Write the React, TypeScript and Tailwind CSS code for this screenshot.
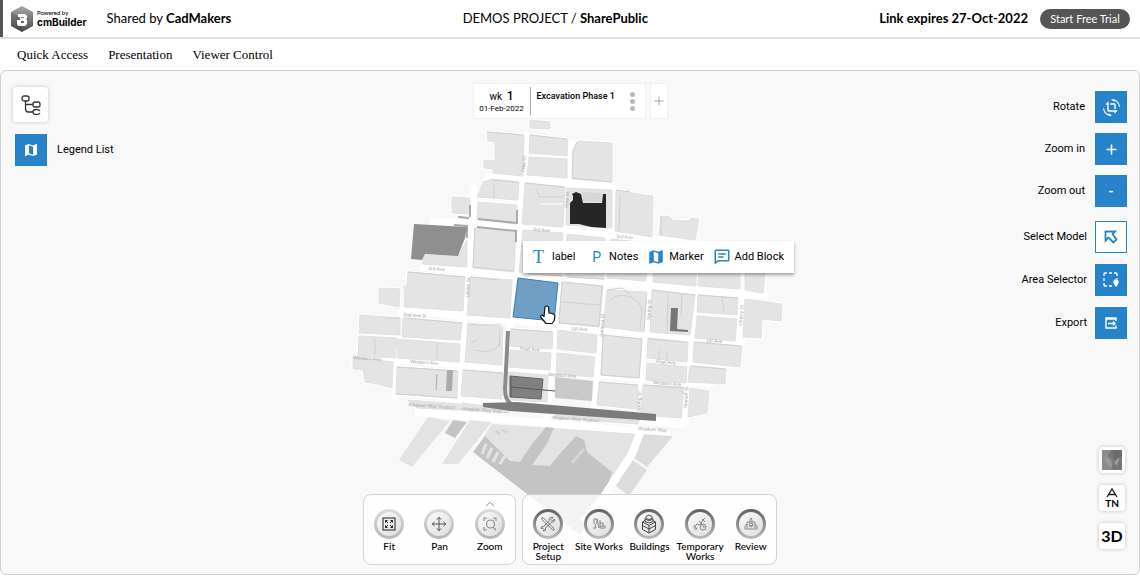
import type { ReactNode } from "react";
import { ChevronUp, Move, Plus } from "lucide-react";
import { BiCommentDetail } from "react-icons/bi";
import { MdCropRotate, MdMap } from "react-icons/md";

const blocks = [
  "530,120 550,122 550,129 530,128",
  "487,132 524,135 523,176 493,173 493,169 484,168 484,160 495,161 495,142 488,141",
  "530,135 568,140 567,156 529,153",
  "529,157 567,159 567,178 527,175",
  "578,141 612,143 612,182 573,179 573,150",
  "452,197 470,198 470,214 452,213",
  "483,182 492,179 519,182 518,200 477,197",
  "478,202 517,205 516,223 477,218",
  "525,183 565,187 563,227 522,224",
  "567,188 612,190 612,228 566,225",
  "616,190 632,193 653,196 652,237 615,231",
  "661,216 670,217 672,220 688,221 691,218 699,219 695,240 659,235",
  "425,255 458,256 467,240 467,267 422,264",
  "475,228 516,233 514,272 473,268",
  "523,230 563,233 562,276 519,272",
  "567,234 605,238 604,279 565,276",
  "611,239 648,243 646,281 607,278",
  "655,244 697,248 696,286 653,282",
  "700,250 740,254 740,289 698,286",
  "745,270 765,273 763,293 745,290",
  "408,272 465,277 463,311 405,307",
  "379,288 400,289 399,307 379,303",
  "470,277 512,280 510,318 467,315",
  "562,282 603,286 599,327 559,323",
  "607,290 647,292 644,332 603,327",
  "652,290 695,295 690,335 650,332",
  "698,295 738,298 737,315 697,312",
  "697,316 737,319 735,341 695,338",
  "745,299 782,304 781,321 762,319 761,338 743,337",
  "360,315 400,318 400,335 359,333",
  "403,318 462,323 460,340 402,337",
  "359,336 397,338 395,358 358,356",
  "398,339 460,344 459,362 397,358",
  "468,323 503,327 502,365 465,362",
  "511,329 553,332 552,349 510,346",
  "510,350 551,353 550,370 509,367",
  "558,330 597,335 596,353 557,349",
  "557,353 595,357 593,377 556,374",
  "603,335 642,339 639,378 601,375",
  "648,338 688,342 687,362 647,358",
  "647,363 687,367 686,383 646,380",
  "694,342 742,346 740,367 693,362",
  "690,366 726,369 725,384 688,382",
  "353,357 393,362 392,388 377,384 365,382 363,370 353,369",
  "397,367 458,371 457,398 396,394",
  "463,370 503,373 502,399 461,396",
  "508,372 548,375 547,402 508,400",
  "599,382 638,385 637,409 597,405",
  "643,385 684,387 681,418 641,415",
  "690,388 709,391 707,413 688,417",
  "407,400 460,404 460,410 417,408",
  "462,403 500,408 500,413 460,410",
  "555,412 640,419 638,424 555,418",
];

const shadows = [
  "M487 132l36 3M530 135l37 4M578 141l-5 10-1 27 39 4",
  "M492 180l26 2M494 182v16M525 183l39 4M477 219l39 5M517 209v15",
  "M616 190l14 2-3-2M620 196l-1 35M661 216v19M475 228l-2 39 40 4",
  "M408 272l57 5M470 277l30 3M405 285v22M528 274l36 2M567 277l37 2",
  "M562 282l40 4-3 40-40-3 3-41M562 302l38 3",
  "M607 290l15-2 9 7M611 299c12-8 28-2 31 12l-2 18M646 299l-2 31",
  "M652 290l43 5M668 293l-1 39M682 294l-1 22M698 295l39 3M722 297l2 16",
  "M386 318h14M405 318l57 5M375 338v17M437 342v17M468 325h33",
  "M470 343l7-3M475 350c12 3 22 2 26-10M500 329l-1 18",
  "M603 335l39 4-3 39-38-3 2-39M648 339l38 3M659 350v10M667 351v10",
  "M463 370l39 3M397 367l60 4M396 394l61 4M511 329l41 3",
  "M599 382l38 3M643 385l41 3M679 390l7 4M691 366l34 3M694 342l46 4",
];

const streetNames = [
  { name: "3rd Ave", x: 533, y: 231 },
  { name: "3rd Ave", x: 616, y: 238 },
  { name: "3rd Ave", x: 428, y: 270 },
  { name: "2nd Ave S", x: 403, y: 316 },
  { name: "1st Ave", x: 571, y: 330 },
  { name: "1st Ave", x: 706, y: 342 },
  { name: "Post Ave", x: 520, y: 350 },
  { name: "Post Ave", x: 656, y: 363 },
  { name: "Western Ave", x: 410, y: 363 },
  { name: "Western Ave", x: 353, y: 359 },
  { name: "Western Ave", x: 548, y: 376 },
  { name: "Western Ave", x: 653, y: 384 },
  { name: "Alaskan Way Viaduct", x: 408, y: 406 },
  { name: "Alaskan Way Viaduct", x: 462, y: 410 },
  { name: "Alaskan Way Viaduct", x: 552, y: 419 },
  { name: "Alaskan Way", x: 638, y: 430 },
];

function CityMap() {
  return (
    <svg viewBox="350 110 440 430" className="h-[430px] w-[440px]" aria-label="Site map" role="img">
      <g stroke="#fff" strokeWidth="7" fill="none">
        <path d="M486 177l126 9M430 221l270 22M420 267l348 29M400 310l345 33M370 358l345 26M400 392l285 33M415 412l255 22" />
        <path d="M527 132l-12 140-12 140M571 140l-15 180-10 100M613 185l-12 150-8 90M652 240l-12 130-5 60M698 250l-10 150-3 25M743 290l-4 50M474 185l-10 130-6 100M401 310l-6 90" />
      </g>
      <g fill="#fff" stroke="#fff" strokeWidth="3" strokeLinejoin="round">
        {blocks.map((points) => <polygon key={points} points={points} />)}
      </g>
      <g fill="#e3e3e3">
        <path d="M428 417l22 4-38 46-13-7zM470 420l22 2-34 42h-16z" />
        <path d="M492 424l148 10-32 50-90-8-34-40z" />
        <path d="M640 434l33 2-26 31-17-12zM628 457l19 13-18 26-18-14z" fill="#dcdcdc" />
      </g>
      <path d="M453 420l14 2-12 16-10-5zM485 436l-12 16 107 83 28-51 4-12-25-20-3-12-8-4-18 20-8 10-18-1 14-20 8-17-8-1-14 17-12 18-10-1z" fill="#c4c4c4" />
      <path d="M486 444l-4 10M492 448l-5 10M498 452l-5 10M505 456l-5 8" stroke="#e3e3e3" strokeWidth="3" />
      <path d="M572 463l12-14M496 431l4 4M502 430l6 2" stroke="#d6d6d6" strokeWidth="3" />
      <path d="M641 430l-9 24-29 44-20 24" fill="none" stroke="#fff" strokeWidth="8" />
      <g fill="#e4e4e4" stroke="#e0e0e0">
        {blocks.map((points) => <polygon key={points} points={points} />)}
      </g>
      <g fill="none" stroke="#d0d0d0" strokeWidth="1">
        {shadows.map((d) => <path key={d} d={d} />)}
      </g>
      <path d="M537 189l2 8h24" fill="none" stroke="#cdcdcd" />
      <path d="M540 204h23M478 200l40 3" stroke="#fff" strokeWidth="1" />
      <path d="M478 219l39 4v-13M477 227l39 4v11M470 205v12M458 217l11 1M454 225l13 1v12" fill="none" stroke="#aaa" strokeWidth="2" />
      <path d="M414 224l53 3-2 11-7 18-33-2-3 6-11-1z" fill="#8f8f8f" />
      <path d="M555 377l38 4-1 20-37-3z" fill="#c9c9c9" />
      <path d="M583 201l-1-9 20 1-1 9z" fill="#d7d7d7" />
      <path d="M570 203l3-3v-4l-1-2 4-2 5 2 2 9h19l1-9h3v34l-15-1-12-3h-9z" fill="#262626" />
      <path d="M671 308h7l-1 21 11 1v2l-18-1z" fill="#777" />
      <path d="M447 370h6l-1 21h-6z" fill="#aaa" />
      <path d="M437 374l-1 16" stroke="#aaa" />
      <path d="M510 376l33 3-2 20-31-2z" fill="#808080" stroke="#666" />
      <path d="M511 387l44 4M511 377v20" stroke="#5a5a5a" fill="none" />
      <path d="M508 331l-3 58q0 13 8 16" fill="none" stroke="#8b8b8b" strokeWidth="4" />
      <path d="M483 403l34-1 139 12v7l-146-10-27-4z" fill="#7b7b7b" />
      <g fill="#a5a5a5" className="font-['Liberation_Sans'] text-[5px]">
        {streetNames.map(({ name, x, y }) => (
          <text key={`${name}-${x}`} x={x} y={y} transform={`rotate(4 ${x} ${y})`}>{name}</text>
        ))}
        <text x="525" y="172" transform="rotate(-86 525 172)">Pike St</text>
        <text x="469" y="297" transform="rotate(-86 469 297)">Union St</text>
        <text x="603" y="337" transform="rotate(-86 603 337)">Seneca St</text>
        <text x="650" y="320" transform="rotate(-86 650 320)">Spring St</text>
        <text x="742" y="326" transform="rotate(-86 742 326)">Cherry St</text>
        <text x="640" y="412" transform="rotate(-86 640 412)">Spring St</text>
        <text x="687" y="408" transform="rotate(-86 687 408)">Marion St</text>
        <text x="568" y="208" transform="rotate(-86 568 208)">Pine St</text>
      </g>
      <path d="M518 278l40 5-4 38-41-4z" fill="#709fc5" stroke="#2683c9" />
      <path
        d="M545 307q2-2 3.500 0l.5 6q5 0 6 3l-1 5-2 2.500h-6l-5-6q-1-2 1-2.500l2 1.500z"
        fill="#fff"
        stroke="#111"
        strokeWidth="1.2"
        strokeLinejoin="round"
      />
    </svg>
  );
}

function Logo() {
  return (
    <svg viewBox="0 0 22 26" className="h-[26px] w-[22px]" aria-hidden="true">
      <defs>
        <linearGradient id="hex" x1="0" y1="0" x2="0" y2="1">
          <stop offset="0" stopColor="#a5a5a5" />
          <stop offset="1" stopColor="#4b4b4b" />
        </linearGradient>
      </defs>
      <path d="M11 0l11 6v14l-11 6-11-6V6z" fill="url(#hex)" />
      <path d="M0 6l11 7v13L0 20z" fill="#000" opacity=".12" />
      <path d="M7 8h7l2 2v2l-1 1 1 1v4l-2 2H7l-1-2v-4h3v-3H7zM10 11v1h3v-1zM10 15v2h3v-2z" fill="#fff" fillRule="evenodd" />
    </svg>
  );
}

function TreeIcon() {
  return (
    <svg viewBox="0 0 20 20" className="size-5" fill="none" stroke="#333" strokeWidth="1.3">
      <rect x="1" y="1" width="7" height="5" rx="2" />
      <rect x="12" y="7" width="7" height="5" rx="2" />
      <path d="M4.500 6v8q0 3 3 3H12M4.500 9.500H12M19 16q-1-1.500-3-1.500h-1q-3 0-3 2.500t3 2.500h1q2 0 3-1.500" />
    </svg>
  );
}

function SelectIcon() {
  return (
    <svg viewBox="0 0 14 14" className="size-3.5" fill="none" stroke="#2683c9" strokeWidth="1.8">
      <path d="M1.500 1.500h9.500l-2.500 2.500 4 5.500-3 3-5-5-3 3z" />
    </svg>
  );
}

function AreaIcon() {
  return (
    <svg viewBox="0 0 16 16" className="size-4" fill="none" stroke="#fff" strokeWidth="1.3">
      <path d="M1 4V2q0-1 1-1h2M6 1h3M11 1h2q1 0 1 1v2M1 6v3M1 11v2q0 1 1 1h2M6 14h3M14 6v1" />
      <path d="M13 8q2 0 2 2 0 2-2 4-2-2-2-4 0-2 2-2z" fill="#fff" />
    </svg>
  );
}

function ExportIcon() {
  return (
    <svg viewBox="0 0 14 14" className="size-3.5" fill="none" stroke="#fff" strokeWidth="1.4">
      <path d="M12 5V2H2v10h10V9.500M2 3h10" />
      <path d="M4 7.500h6.500M9 5.500l2 2-2 2" />
    </svg>
  );
}

function FitIcon() {
  return (
    <svg viewBox="0 0 14 14" className="size-3.5" fill="none" stroke="#222" strokeWidth="1">
      <rect x="1" y="1" width="12" height="12" />
      <path d="M6 6L3.500 3.500M8 6l2.500-2.500M6 8l-2.500 2.500M8 8l2.500 2.500" />
      <path d="M3.500 5.500v-2h2M8.500 3.500h2v2M3.500 8.500v2h2M8.500 10.500h2v-2" />
    </svg>
  );
}

function ZoomAreaIcon() {
  return (
    <svg viewBox="0 0 14 14" className="size-3.5" fill="none" stroke="#888" strokeWidth="1.1">
      <path d="M1 4V1h3M10 1h3v3M1 10v3h3M10.500 10.500L13 13" />
      <circle cx="7.500" cy="7" r="4" />
    </svg>
  );
}

function ToolsIcon() {
  return (
    <svg viewBox="0 0 16 16" className="size-4" fill="none" stroke="#666" strokeWidth="0.9">
      <path d="M2 1.500l1 0 9 9 2.500 3-1 1-3-2.500-9-9zM14.500 3l-2 2-1.500-1.500 2-2q-3-1-4 1.500l.5 1.500-6 6Q1 10 1 12.500L2.500 12 4 13.500 3.500 15q3 0 2-3l6-6q3 1 3-3z" />
    </svg>
  );
}

function CraneIcon() {
  return (
    <svg viewBox="0 0 14 12" className="h-3 w-3.5" fill="none" stroke="#888" strokeWidth="1">
      <path d="M2 1h3v4l-2 2 1 3H1M5 1l2 9M8 2v8h5V8H8M8 5h3v3M2 1v5" />
    </svg>
  );
}

function BlocksIcon() {
  return (
    <svg viewBox="0 0 16 20" className="h-5 w-4" fill="none" stroke="#444" strokeWidth="1">
      <path d="M4 6.500L1.500 8v7.500L8 19l6.500-3.500V8L12 6.500M1.500 8L8 11.500 14.500 8M1.500 11.500L8 15l6.500-3.500M8 11.500V19" />
      <path d="M4 4.500v3q4 3 8 0v-3M5 2.500q3-3 6 0v2q-3 2-6 0zM4 4.500q4 4 8 0" />
    </svg>
  );
}

function ExcavatorIcon() {
  return (
    <svg viewBox="0 0 14 14" className="size-3.5" fill="none" stroke="#888" strokeWidth="1">
      <path d="M1 11l3-4 3 1 3-5 2-2M9 2l3 3M1 8l3 4H1M6 4l3 3" />
      <circle cx="10" cy="10" r="3" />
      <path d="M10 8v2h2" />
    </svg>
  );
}

function ReviewIcon() {
  return (
    <svg viewBox="0 0 14 14" className="size-3.5" fill="none" stroke="#888" strokeWidth="1">
      <path d="M3 11V5h8v6M1 12h12M1 12V9l2-2M13 12V9l-2-2M6 5V3l1-2 1 2v2" />
      <circle cx="7" cy="8" r="2" />
      <path d="M6 8l1 1 2-2" />
    </svg>
  );
}

interface SideToolProps {
  id: string;
  label: string;
  children: ReactNode;
  outlined?: boolean;
}

function SideTool({ id, label, children, outlined }: SideToolProps) {
  return (
    <>
      <label htmlFor={id} className="text-right text-[11px] leading-4">{label}</label>
      <button
        id={id}
        className={
          outlined
            ? "flex size-8 items-center justify-center border border-[#2683c9] bg-white"
            : "flex size-8 items-center justify-center bg-[#2683c9] text-white"
        }
      >
        {children}
      </button>
    </>
  );
}

interface DockItemProps {
  label: string;
  children: ReactNode;
  dark?: boolean;
}

function DockItem({ label, children, dark }: DockItemProps) {
  return (
    <button className="flex flex-col items-center gap-0.5 text-[10px] leading-[10px] font-medium">
      <span
        className={
          dark
            ? "flex size-[30px] items-center justify-center rounded-full bg-linear-to-b from-[#606060] to-[#bdbdbd] p-[3px]"
            : "flex size-[30px] items-center justify-center rounded-full bg-linear-to-b from-[#dcdcdc] to-[#b5b5b5] p-[3px]"
        }
      >
        <span className="flex size-6 items-center justify-center rounded-full bg-linear-to-br from-[#fafafa] to-[#dedede]">
          {children}
        </span>
      </span>
      {label}
    </button>
  );
}

function Timeline() {
  return (
    <div className="flex gap-1 font-[Roboto,sans-serif]">
      <div className="flex h-9 w-[173px] items-center border border-[#f0f0f0] bg-white">
        <div className="flex w-14 flex-col items-center">
          <span className="text-[10px] leading-[14px]">wk <b className="ml-0.5 text-[12px] font-medium">1</b></span>
          <span className="text-[8px] leading-[10px]">01-Feb-2022</span>
        </div>
        <div className="h-7 w-px bg-[#aaa]" />
        <span className="ml-1.5 flex-1 self-start pt-1.5 text-[9px] leading-3 font-medium">Excavation Phase 1</span>
        <button className="mr-2.5 flex flex-col gap-0.5" aria-label="Phase options">
          <span className="size-[5px] rounded-full bg-[#bbb]" />
          <span className="size-[5px] rounded-full bg-[#bbb]" />
          <span className="size-[5px] rounded-full bg-[#bbb]" />
        </button>
      </div>
      <button className="flex h-9 w-[18px] items-center justify-center border border-[#f0f0f0] bg-white" aria-label="Add phase">
        <Plus size={14} strokeWidth={1.5} color="#999" />
      </button>
    </div>
  );
}

function MapMenu() {
  return (
    <div className="flex h-8 w-[271px] items-center justify-between bg-white px-[10px] font-[Roboto,sans-serif] text-[11px] shadow-[0_2px_3px_rgba(0,0,0,0.35)]">
      <button className="flex items-center gap-2">
        <span className="font-['Liberation_Serif',serif] text-[18px] leading-5 text-[#2683c9]" aria-hidden="true">T</span>
        label
      </button>
      <button className="ml-2 flex items-center gap-2">
        <span className="text-[14px] leading-5 text-[#2683c9]" aria-hidden="true">P</span>
        Notes
      </button>
      <button className="flex items-center gap-1"><MdMap size={18} color="#2683c9" />Marker</button>
      <button className="flex items-center gap-1"><BiCommentDetail size={18} color="#2683c9" />Add Block</button>
    </div>
  );
}

export default function App() {
  return (
    <div className="flex min-h-screen flex-col bg-white pb-px font-[Lato,sans-serif] text-black">
      <header className="flex h-[39px] items-center justify-between border-b-2 border-[#e0e0e0] text-[13px]">
        <div className="flex h-full items-center border-l-[3px] border-[#555] pl-2">
          <Logo />
          <div className="ml-1 flex flex-col">
            <span className="text-[6px] leading-[7px] font-medium">Powered by</span>
            <span className="font-[Inter,sans-serif] text-[10px] leading-3 font-bold">cmBuilder</span>
          </div>
          <p className="ml-5">Shared by <b>CadMakers</b></p>
        </div>
        <p>DEMOS PROJECT / <b>SharePublic</b></p>
        <div className="flex items-center justify-end gap-3 pr-[10px]">
          <b>Link expires 27-Oct-2022</b>
          <button className="h-5 w-[90px] rounded-full bg-[#555] text-[11px] leading-5 text-white">Start Free Trial</button>
        </div>
      </header>
      <nav className="flex h-[31px] items-center gap-5 pl-[17px] font-['Liberation_Serif',serif] text-[13px]">
        <a href="#quick-access">Quick Access</a>
        <a href="#presentation">Presentation</a>
        <a href="#viewer-control">Viewer Control</a>
      </nav>
      <main className="relative flex flex-1 overflow-hidden rounded-md border border-[#cfcfcf] bg-[#f8f8f8]">
        <div className="absolute top-[39px] left-1/2 w-[440px] -translate-x-1/2">
          <CityMap />
          <div className="absolute top-[131px] left-[173px] z-20">
            <MapMenu />
          </div>
        </div>

        <div className="z-10 flex flex-1 flex-col items-start gap-3 pt-4 pl-3 font-[Roboto,sans-serif]">
          <button className="flex size-[35px] items-center justify-center rounded-sm bg-white shadow-[0_0_4px_rgba(0,0,0,0.2)]" aria-label="Model tree">
            <TreeIcon />
          </button>
          <div className="ml-0.5 flex items-center gap-[10px]">
            <button id="legend" className="flex size-8 items-center justify-center bg-[#2683c9]">
              <MdMap size={16} color="#fff" />
            </button>
            <label htmlFor="legend" className="text-[11px] leading-4">Legend List</label>
          </div>
        </div>

        <div className="z-10 flex flex-col items-center justify-between pt-3 pb-[9px]">
          <Timeline />
          <div className="flex gap-1.5">
            <div className="relative grid h-[71px] w-[153px] grid-cols-3 items-start rounded-lg border border-[#d3d3d3] bg-white/90 pt-3.5">
              <DockItem label="Fit"><FitIcon /></DockItem>
              <DockItem label="Pan"><Move size={16} strokeWidth={1.5} color="#555" /></DockItem>
              <DockItem label="Zoom"><ZoomAreaIcon /></DockItem>
              <ChevronUp className="absolute top-0.5 right-[18px]" size={14} strokeWidth={1.5} color="#777" />
            </div>
            <div className="grid h-[71px] w-[255px] grid-cols-5 items-start rounded-lg border border-[#d3d3d3] bg-white/80 pt-3.5">
              <DockItem dark label="Project Setup"><ToolsIcon /></DockItem>
              <DockItem dark label="Site Works"><CraneIcon /></DockItem>
              <DockItem dark label="Buildings"><BlocksIcon /></DockItem>
              <DockItem dark label="Temporary Works"><ExcavatorIcon /></DockItem>
              <DockItem dark label="Review"><ReviewIcon /></DockItem>
            </div>
          </div>
        </div>

        <div className="z-10 flex flex-1 flex-col items-end justify-between pt-5 pr-3 pb-[25px]">
          <div className="flex flex-col gap-3.5 font-[Roboto,sans-serif]">
            <div className="grid grid-cols-[1fr_auto] items-center gap-[10px]">
              <SideTool id="rotate" label="Rotate"><MdCropRotate size={17} /></SideTool>
              <SideTool id="zoom-in" label="Zoom in"><Plus size={15} strokeWidth={2.5} /></SideTool>
              <SideTool id="zoom-out" label="Zoom out"><span className="text-[14px] font-medium">-</span></SideTool>
            </div>
            <div className="grid grid-cols-[1fr_auto] items-center gap-x-2 gap-y-[11px]">
              <SideTool id="select-model" label="Select Model" outlined><SelectIcon /></SideTool>
              <SideTool id="area-selector" label="Area Selector"><AreaIcon /></SideTool>
              <SideTool id="export" label="Export"><ExportIcon /></SideTool>
            </div>
          </div>
          <div className="flex flex-col gap-3 pr-0.5">
            <button className="flex size-[26px] items-center justify-center rounded-sm bg-white shadow-[0_0_4px_rgba(0,0,0,0.2)]" aria-label="Satellite view">
              <svg viewBox="0 0 20 20" className="size-5">
                <path d="M0 0h20v20H0z" fill="#777" />
                <path d="M0 0h9l-3 6 5 5-2 9H0z" fill="#8c8c8c" />
                <path d="M2 7l6 3 2 8-5-5zM12 12l6-5-3 9z" fill="#9c9c9c" />
                <path d="M10 0h10v7l-8 2z" fill="#6b6b6b" />
              </svg>
            </button>
            <button className="flex size-[26px] flex-col items-center justify-center rounded-sm bg-white shadow-[0_0_4px_rgba(0,0,0,0.2)]" aria-label="True north">
              <svg viewBox="0 0 12 10" className="h-2.5 w-3" fill="none" stroke="#222" strokeWidth="1.4">
                <path d="M1 9l5-8 5 8M3 6.500h6" />
              </svg>
              <span className="text-[10px] leading-[10px] font-bold">TN</span>
            </button>
            <button className="flex size-[26px] items-center justify-center rounded-sm bg-white text-[16px] font-bold shadow-[0_0_4px_rgba(0,0,0,0.2)]">
              3D
            </button>
          </div>
        </div>
      </main>
    </div>
  );
}
